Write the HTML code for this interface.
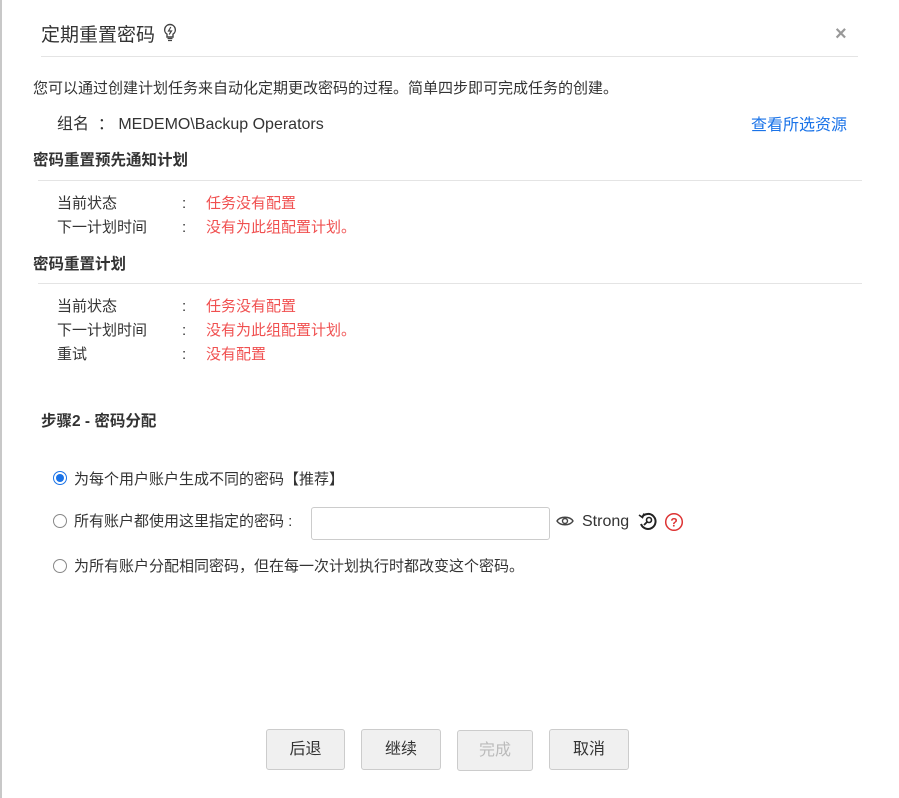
<!DOCTYPE html>
<html><head><meta charset="utf-8"><style>
body{margin:0;width:899px;height:798px;background:#fff;font-family:"Liberation Sans","Noto Sans CJK SC",sans-serif;color:#333;position:relative;overflow:hidden;font-size:15px}
.a{position:absolute;white-space:nowrap;line-height:20px}
.lb{position:absolute;left:0;top:0;width:2px;height:798px;background:#c8c8c8}
.hr{position:absolute;height:1px;background:#e4e4e4}
.red{color:#f05050}
.b{font-weight:bold}
.radio{position:absolute;width:12px;height:12px;border:1px solid #888;border-radius:50%;background:#fff}
.radio.on{border-color:#1a73e8}
.radio.on:after{content:"";position:absolute;left:2px;top:2px;width:8px;height:8px;border-radius:50%;background:#1a73e8}
.btn{position:absolute;top:729px;height:39px;border:1px solid #ccc;border-radius:3px;background:#f0f0f0;text-align:center;line-height:39px;font-size:16px;color:#333}
</style></head><body>
<div class="lb"></div>
<div class="a" style="left:41px;top:24px;font-size:19px;line-height:24px">定期重置密码</div>
<svg class="a" style="left:163px;top:23px" width="14" height="20" viewBox="0 0 14 20"><path d="M7 1.5a5.3 5.3 0 0 0-3 9.7V14h6v-2.8A5.3 5.3 0 0 0 7 1.5z" fill="none" stroke="#444" stroke-width="1.4"/><path d="M7.8 4L5.5 8h3L6.2 11.5" fill="none" stroke="#444" stroke-width="1.2"/><path d="M4.5 15.5h5M5 17.5h4" stroke="#444" stroke-width="1.3"/></svg>
<div class="a" style="left:835px;top:24px;font-size:20px;color:#999;font-weight:bold">×</div>
<div class="hr" style="left:41px;top:56px;width:817px"></div>
<div class="a" style="left:33px;top:79px">您可以通过创建计划任务来自动化定期更改密码的过程。简单四步即可完成任务的创建。</div>
<div class="a" style="left:57px;top:115px;font-size:16px">组名 &nbsp;：&nbsp;MEDEMO\Backup Operators</div>
<div class="a" style="left:751px;top:116px;color:#1a73e8;font-size:16px">查看所选资源</div>
<div class="a b" style="left:33px;top:151px;font-size:15.5px">密码重置预先通知计划</div>
<div class="hr" style="left:38px;top:180px;width:824px"></div>
<div class="a" style="left:57px;top:194px">当前状态</div><div class="a" style="left:182px;top:194px">:</div><div class="a red" style="left:206px;top:194px">任务没有配置</div>
<div class="a" style="left:57px;top:218px">下一计划时间</div><div class="a" style="left:182px;top:218px">:</div><div class="a red" style="left:206px;top:218px">没有为此组配置计划。</div>
<div class="a b" style="left:33px;top:255px;font-size:15.5px">密码重置计划</div>
<div class="hr" style="left:38px;top:283px;width:824px"></div>
<div class="a" style="left:57px;top:297px">当前状态</div><div class="a" style="left:182px;top:297px">:</div><div class="a red" style="left:206px;top:297px">任务没有配置</div>
<div class="a" style="left:57px;top:321px">下一计划时间</div><div class="a" style="left:182px;top:321px">:</div><div class="a red" style="left:206px;top:321px">没有为此组配置计划。</div>
<div class="a" style="left:57px;top:345px">重试</div><div class="a" style="left:182px;top:345px">:</div><div class="a red" style="left:206px;top:345px">没有配置</div>
<div class="a b" style="left:41px;top:412px;font-size:15.5px">步骤2 - 密码分配</div>
<div class="radio on" style="left:53px;top:471px"></div>
<div class="a" style="left:74px;top:470px">为每个用户账户生成不同的密码【推荐】</div>
<div class="radio" style="left:53px;top:514px"></div>
<div class="a" style="left:74px;top:512px">所有账户都使用这里指定的密码 :</div>
<div style="position:absolute;left:311px;top:507px;width:237px;height:31px;border:1px solid #ccc;border-radius:3px"></div>
<svg class="a" style="left:556px;top:514px" width="18" height="14" viewBox="0 0 18 14"><path d="M1 7C4 2 14 2 17 7C14 12 4 12 1 7z" fill="none" stroke="#444" stroke-width="1.4"/><circle cx="9" cy="7" r="2.5" fill="none" stroke="#444" stroke-width="1.4"/></svg>
<div class="a" style="left:582px;top:512px;font-size:16px">Strong</div>
<svg class="a" style="left:638px;top:512px" width="20" height="20" viewBox="0 0 20 20"><path d="M4 5A7.5 7.5 0 1 1 3 12" fill="none" stroke="#222" stroke-width="2"/><path d="M1 3l3.5 2.5L6 1.5" fill="none" stroke="#222" stroke-width="1.6"/><circle cx="11" cy="8" r="2.5" fill="none" stroke="#222" stroke-width="1.6"/><path d="M9.3 9.7L6 13" stroke="#222" stroke-width="1.8"/></svg>
<svg class="a" style="left:664px;top:512px" width="20" height="20" viewBox="0 0 20 20"><circle cx="10" cy="10" r="8.3" fill="none" stroke="#d33" stroke-width="1.5"/><text x="10" y="14.5" text-anchor="middle" font-size="12" font-weight="bold" fill="#d33" font-family="Liberation Sans">?</text></svg>
<div class="radio" style="left:53px;top:559px"></div>
<div class="a" style="left:74px;top:557px">为所有账户分配相同密码，但在每一次计划执行时都改变这个密码。</div>
<div class="btn" style="left:266px;width:77px">后退</div>
<div class="btn" style="left:361px;width:78px">继续</div>
<div class="btn" style="left:457px;top:730px;width:74px;color:#bbb">完成</div>
<div class="btn" style="left:549px;width:78px">取消</div>
</body></html>
